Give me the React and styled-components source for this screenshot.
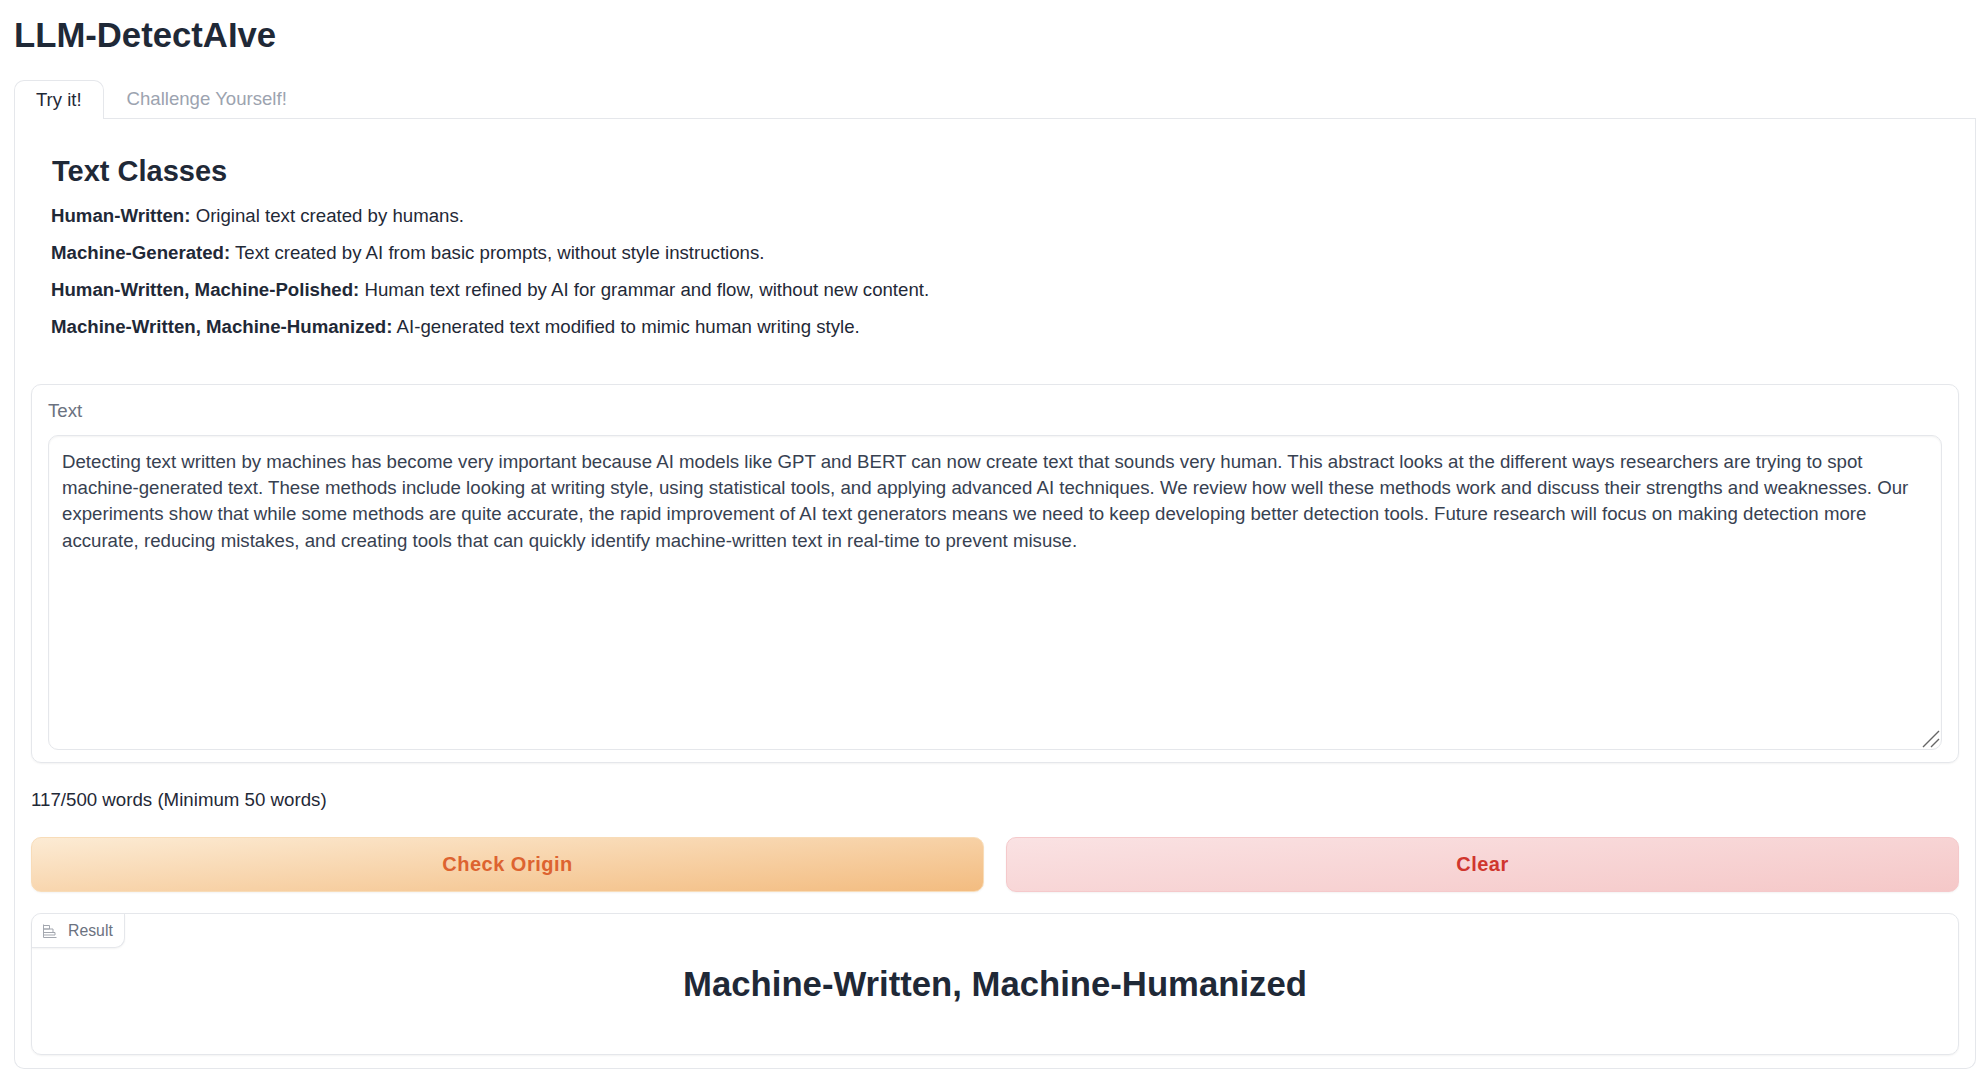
import React from "react";
import styled, { createGlobalStyle } from "styled-components";

const Global = createGlobalStyle`
  html, body { margin: 0; padding: 0; background: #fff; }
  body { font-family: "Liberation Sans", Arial, sans-serif; color: #1f2937; }
`;
const Page = styled.div`
  padding: 15px 12px 5px 14px;
  display: flex;
  flex-direction: column;
`;
const Title = styled.h1`
  margin: 0 0 24px 0;
  font-size: 34.7px;
  line-height: 41px;
  font-weight: 700;
  color: #1f2937;
`;
const TabBar = styled.div`
  display: flex;
  height: 38px;
  border-bottom: 1px solid #e5e7eb;
`;
const Tab = styled.div`
  padding: 0 ${(p) => (p.$active ? "21px" : "22px")};
  margin-left: ${(p) => (p.$active ? "0" : "1px")};
  font-size: ${(p) => (p.$active ? "18.5px" : "18.6px")};
  line-height: 38px;
  height: ${(p) => (p.$active ? "39px" : "38px")};
  box-sizing: border-box;
  color: ${(p) => (p.$active ? "#1f2937" : "#9ca3af")};
  ${(p) => p.$active && `
    background: #fff;
    border: 1px solid #e5e7eb;
    border-bottom: none;
    border-radius: 10px 10px 0 0;
  `}
`;
const Panel = styled.div`
  border: 1px solid #e5e7eb;
  border-top: none;
  border-radius: 0 0 10px 10px;
  padding: 34px 16px 13px 16px;
  display: flex;
  flex-direction: column;
`;
const Intro = styled.div`
  padding-left: 20px;
  margin-bottom: 39px;
`;
const Heading = styled.h2`
  margin: 0 0 8px 1px;
  font-size: 29px;
  line-height: 36px;
  font-weight: 700;
`;
const ClassLine = styled.p`
  margin: 0;
  font-size: 18.65px;
  line-height: 37px;
  color: #1f2937;
  b { font-weight: 700; }
`;
const TextBlock = styled.div`
  border: 1px solid #e5e7eb;
  border-radius: 10px;
  box-shadow: 0 1px 2px rgba(0,0,0,0.05);
  padding: 13px 16px 12px 16px;
  height: 379px;
  box-sizing: border-box;
  display: flex;
  flex-direction: column;
`;
const Label = styled.div`
  font-size: 18.7px;
  line-height: 26px;
  color: #6b7280;
  margin-bottom: 11px;
`;
const AreaWrap = styled.div`
  position: relative;
  flex: 1;
  display: flex;
`;
const Area = styled.textarea`
  flex: 1;
  width: 100%;
  box-sizing: border-box;
  border: 1px solid #e5e7eb;
  border-radius: 10px;
  box-shadow: inset 0 1px 2px rgba(0,0,0,0.05);
  padding: 13px 12px 11px 13px;
  margin: 0;
  font-family: "Liberation Sans", Arial, sans-serif;
  font-size: 18.67px;
  line-height: 26.2px;
  color: #374151;
  outline: none;
  resize: none;
`;
const Grip = styled.svg`
  position: absolute;
  right: 1px;
  bottom: 1px;
  width: 20px;
  height: 20px;
`;
const Count = styled.div`
  font-size: 18.7px;
  line-height: 26px;
  margin: 24px 0 24px 0;
  color: #1f2937;
`;
const Buttons = styled.div`
  display: grid;
  grid-template-columns: 1fr 1fr;
  gap: 22px;
  margin-bottom: 21px;
`;
const Button = styled.button`
  height: 55px;
  border-radius: 10px;
  font-family: "Liberation Sans", Arial, sans-serif;
  font-size: 20px;
  font-weight: 700;
  letter-spacing: 0.5px;
  box-shadow: 0 1px 2px rgba(0,0,0,0.05);
  border: 1px solid ${(p) => (p.$tone === "primary" ? "#f8dcb8" : "#f5c9cb")};
  color: ${(p) => (p.$tone === "primary" ? "#dd6330" : "#d0362e")};
  background: ${(p) => p.$tone === "primary"
    ? "linear-gradient(176deg, #fcebd4, #f3bc80)"
    : "linear-gradient(176deg, #fae2e3, #f5c8c8)"};
`;
const Result = styled.div`
  position: relative;
  border: 1px solid #e5e7eb;
  border-radius: 10px;
  box-shadow: 0 1px 2px rgba(0,0,0,0.05);
  height: 142px;
  box-sizing: border-box;
  display: flex;
  justify-content: center;
  padding-top: 48px;
`;
const Badge = styled.div`
  position: absolute;
  top: 0;
  left: 0;
  height: 34px;
  box-sizing: border-box;
  padding: 0 11px;
  display: flex;
  align-items: center;
  gap: 11px;
  font-size: 15.8px;
  color: #6b7280;
  background: #fff;
  border-right: 1px solid #e5e7eb;
  border-bottom: 1px solid #e5e7eb;
  border-radius: 10px 0 10px 0;
  box-shadow: 0 1px 2px rgba(0,0,0,0.05);
`;
const ResultText = styled.div`
  font-size: 34.7px;
  line-height: 44px;
  font-weight: 700;
  color: #1f2937;
`;

const ChartIcon = () => (
  <svg width="14" height="14" viewBox="0 0 14 14" fill="none" stroke="#a3a7af" strokeWidth="1">
    <path d="M0.5 0.5v13h13" />
    <path d="M0.5 1.5h6v3.5h-6M0.5 5h9.5v3.5h-9.5M0.5 8.5h11.5v2.5h-11.5" />
  </svg>
);

const text = "Detecting text written by machines has become very important because AI models like GPT and BERT can now create text that sounds very human. This abstract looks at the different ways researchers are trying to spot machine-generated text. These methods include looking at writing style, using statistical tools, and applying advanced AI techniques. We review how well these methods work and discuss their strengths and weaknesses. Our experiments show that while some methods are quite accurate, the rapid improvement of AI text generators means we need to keep developing better detection tools. Future research will focus on making detection more accurate, reducing mistakes, and creating tools that can quickly identify machine-written text in real-time to prevent misuse.";

export default function App() {
  return (
    <>
      <Global />
      <Page>
        <Title>LLM-DetectAIve</Title>
        <TabBar>
          <Tab $active>Try it!</Tab>
          <Tab>Challenge Yourself!</Tab>
        </TabBar>
        <Panel>
          <Intro>
            <Heading>Text Classes</Heading>
            <ClassLine><b>Human-Written:</b> Original text created by humans.</ClassLine>
            <ClassLine><b>Machine-Generated:</b> Text created by AI from basic prompts, without style instructions.</ClassLine>
            <ClassLine><b>Human-Written, Machine-Polished:</b> Human text refined by AI for grammar and flow, without new content.</ClassLine>
            <ClassLine><b>Machine-Written, Machine-Humanized:</b> AI-generated text modified to mimic human writing style.</ClassLine>
          </Intro>
          <TextBlock>
            <Label>Text</Label>
            <AreaWrap>
              <Area defaultValue={text} />
              <Grip viewBox="0 0 20 20" fill="none" stroke="#666" strokeWidth="1.4">
                <path d="M2 18 L18 2 M10 18 L18 10" />
              </Grip>
            </AreaWrap>
          </TextBlock>
          <Count>117/500 words (Minimum 50 words)</Count>
          <Buttons>
            <Button $tone="primary">Check Origin</Button>
            <Button $tone="secondary">Clear</Button>
          </Buttons>
          <Result>
            <Badge><ChartIcon />Result</Badge>
            <ResultText>Machine-Written, Machine-Humanized</ResultText>
          </Result>
        </Panel>
      </Page>
    </>
  );
}
